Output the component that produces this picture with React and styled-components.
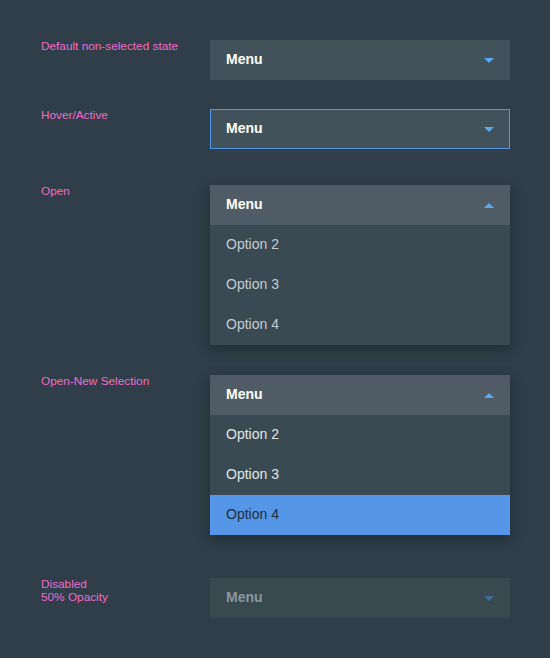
import React from 'react';
import styled, { createGlobalStyle } from 'styled-components';

const GlobalStyle = createGlobalStyle`
  html, body {
    margin: 0;
    padding: 0;
    background: #2f3e48;
    font-family: "Liberation Sans", Arial, sans-serif;
  }
`;

const rows = [
  { label: ['Default non-selected state'], state: 'default', gap: 40 },
  { label: ['Hover/Active'], state: 'hover', gap: 29 },
  { label: ['Open'], state: 'open', gap: 36 },
  { label: ['Open-New Selection'], state: 'selected', gap: 30 },
  { label: ['Disabled', '50% Opacity'], state: 'disabled', gap: 43 },
];

const options = ['Option 2', 'Option 3', 'Option 4'];

const Arrow = ({ up, dim }) => (
  <svg width="10" height="5" viewBox="0 0 10 5">
    <polygon
      points={up ? '0,5 10,5 5,0' : '0,0 10,0 5,5'}
      fill={dim ? '#3b6d9e' : '#5aa7f2'}
    />
  </svg>
);

const Dropdown = ({ state }) => {
  const open = state === 'open' || state === 'selected';
  return (
    <Box $open={open}>
      <Field $state={state}>
        <FieldText $disabled={state === 'disabled'}>Menu</FieldText>
        <Arrow up={open} dim={state === 'disabled'} />
      </Field>
      {open && (
        <List>
          {options.map((o, i) => (
            <Option
              key={o}
              $bright={state === 'selected'}
              $active={state === 'selected' && i === options.length - 1}
            >
              {o}
            </Option>
          ))}
        </List>
      )}
    </Box>
  );
};

export default function App() {
  return (
    <Page>
      <GlobalStyle />
      {rows.map(r => (
        <Row key={r.state} $gap={r.gap}>
          <Label>
            {r.label.map(l => <div key={l}>{l}</div>)}
          </Label>
          <Dropdown state={r.state} />
        </Row>
      ))}
    </Page>
  );
}

const Page = styled.div`
  display: flex;
  flex-direction: column;
  width: 550px;
  height: 658px;
  box-sizing: border-box;
  padding-left: 41px;
  overflow: hidden;
`;

const Row = styled.div`
  display: grid;
  grid-template-columns: 169px 300px;
  align-items: start;
  margin-top: ${p => p.$gap}px;
`;

const Label = styled.div`
  color: #f06cc9;
  font-size: 11.8px;
  line-height: 13px;
`;

const Box = styled.div`
  width: 300px;
  box-shadow: ${p => (p.$open ? '0 4px 12px rgba(0, 0, 0, 0.3)' : 'none')};
`;

const fieldBg = {
  default: '#42525a',
  hover: '#42525a',
  open: '#4f5c65',
  selected: '#4f5c65',
  disabled: '#394950',
};

const Field = styled.div`
  height: 40px;
  box-sizing: border-box;
  display: flex;
  align-items: center;
  justify-content: space-between;
  padding: 0 16px 2px;
  background: ${p => fieldBg[p.$state]};
  border: ${p => (p.$state === 'hover' ? '1px solid #5596e6' : 'none')};
  padding-left: ${p => (p.$state === 'hover' ? 15 : 16)}px;
  padding-right: ${p => (p.$state === 'hover' ? 15 : 16)}px;

  svg {
    margin-top: 2px;
  }
`;

const FieldText = styled.span`
  font-size: 14px;
  font-weight: 700;
  color: ${p => (p.$disabled ? '#8a979e' : '#ffffff')};
`;

const List = styled.div`
  display: flex;
  flex-direction: column;
  background: #3a4a52;
`;

const Option = styled.div`
  height: 40px;
  box-sizing: border-box;
  display: flex;
  align-items: center;
  padding: 0 0 2px 16px;
  font-size: 14px;
  color: ${p => (p.$active ? '#1f2f3a' : p.$bright ? '#e1e5e8' : '#c3ccd2')};
  background: ${p => (p.$active ? '#5596e6' : 'transparent')};
`;
